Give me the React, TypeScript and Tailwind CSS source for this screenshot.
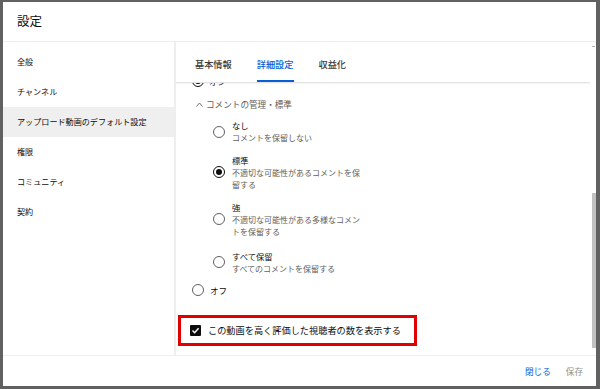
import React from 'react';

const menu = ['全般', 'チャンネル', 'アップロード動画のデフォルト設定', '権限', 'コミュニティ', '契約'];

const Radio = ({ on = false }: { on?: boolean }) => (
  <span
    className={`flex h-[12px] w-[12px] shrink-0 items-center justify-center rounded-full border-[1.5px] ${
      on ? 'border-[#0d0d0d]' : 'border-[#606060]'
    }`}
  >
    {on && <span className="h-[6px] w-[6px] rounded-full bg-[#0d0d0d]" />}
  </span>
);

const options = [
  { label: 'なし', sub: ['コメントを保留しない'], on: false, mt: 'mt-[8.5px]' },
  { label: '標準', sub: ['不適切な可能性があるコメントを保', '留する'], on: true, mt: 'mt-[9.5px]' },
  { label: '強', sub: ['不適切な可能性がある多様なコメン', 'トを保留する'], on: false, mt: 'mt-[10px]' },
  { label: 'すべて保留', sub: ['すべてのコメントを保留する'], on: false, mt: 'mt-[12px]' },
];

export default function App() {
  return (
    <div className="h-[389px] w-[600px] overflow-hidden bg-[#616161] pl-[3px] pt-[2px] font-['Noto_Sans_CJK_JP','Noto_Sans',sans-serif] text-[#0d0d0d]">
      <div className="flex h-[384px] w-[593px] flex-col bg-white">
        {/* header */}
        <div className="flex h-[40px] shrink-0 items-center border-b border-[#eeeeee] pl-[14px] text-[12.5px] leading-none">
          設定
        </div>

        <div className="flex h-[313px] shrink-0">
          {/* sidebar */}
          <div className="w-[173px] shrink-0 border-r-2 border-[#eeeeee] pt-[5px]">
            {menu.map((m, i) => (
              <div
                key={m}
                className={`flex h-[30px] items-center pl-[14px] text-[8.1px] leading-none ${
                  i === 2 ? 'bg-[#efefef]' : ''
                }`}
              >
                {m}
              </div>
            ))}
          </div>

          {/* main */}
          <div className="flex min-w-0 flex-1">
            <div className="flex min-w-0 flex-1 flex-col">
              <div className="flex h-[41px] shrink-0 gap-[25px] border-b border-[#e3e3e3] pl-[19px] text-[9.2px] font-medium leading-none shadow-[0_1px_1px_rgba(0,0,0,0.04)]">
                <div className="flex h-[40px] items-center border-b-2 border-transparent pt-[8px] text-[#3a3a3a]">基本情報</div>
                <div className="flex h-[40px] items-center border-b-2 border-[#065fd4] pt-[8px] text-[#065fd4]">詳細設定</div>
                <div className="flex h-[40px] items-center border-b-2 border-transparent pt-[8px] text-[#3a3a3a]">収益化</div>
              </div>

              <div className="min-h-0 flex-1 overflow-hidden">
                <div className="-mt-[8px] pl-[16px]">
                  <div className="flex h-[12px] items-center gap-[5px] text-[8.5px] leading-none">
                    <Radio on />
                    <span>オン</span>
                  </div>

                  <div className="mt-[10.5px] flex h-[13px] items-center gap-[3px] pl-[4px] text-[8.6px] leading-none text-[#606060]">
                    <svg width="7" height="5" viewBox="0 0 7 5" fill="none">
                      <path d="M0.5 4.5 L3.5 1 L6.5 4.5" stroke="#606060" strokeWidth="0.9" />
                    </svg>
                    <span>コメントの管理・標準</span>
                  </div>

                  <div className="pl-[21px]">
                    {options.map((o) => (
                      <div key={o.label} className={`${o.mt} flex items-center gap-[7px]`}>
                        <Radio on={o.on} />
                        <div>
                          <div className="text-[8.3px] leading-[13px]">{o.label}</div>
                          {o.sub.map((s) => (
                            <div key={s} className="text-[8px] leading-[12px] text-[#606060]">
                              {s}
                            </div>
                          ))}
                        </div>
                      </div>
                    ))}
                  </div>

                  <div className="mt-[9px] flex h-[13px] items-center gap-[6px] text-[8.5px] leading-none">
                    <Radio />
                    <span>オフ</span>
                  </div>

                  <div className="-ml-[14px] mt-[18.5px] flex h-[31px] w-[239px] items-center gap-[7px] border-[3px] border-[#e00000] pl-[9px] text-[9.2px] leading-none">
                    <span className="flex h-[11px] w-[11px] shrink-0 items-center justify-center rounded-[1px] bg-[#0d0d0d]">
                      <svg width="9" height="9" viewBox="0 0 9 9" fill="none">
                        <path d="M1.5 4.6 L3.6 6.7 L7.6 2.2" stroke="white" strokeWidth="1.4" />
                      </svg>
                    </span>
                    <span>この動画を高く評価した視聴者の数を表示する</span>
                  </div>
                </div>
              </div>
            </div>

            {/* scrollbar */}
            <div className="flex w-[6px] shrink-0 flex-col pl-[2px]">
              <div className="mt-[4px] h-[1px] w-[3px] bg-[#b0b0b0]" />
              <div className="mt-[146px] h-[155px] w-[4px] bg-[#c1c1c1]" />
            </div>
          </div>
        </div>

        {/* footer */}
        <div className="flex flex-1 items-center justify-end gap-[15px] border-t border-[#eeeeee] pr-[13px] text-[8.6px] leading-none">
          <span className="text-[#065fd4]">閉じる</span>
          <span className="text-[#909090]">保存</span>
        </div>
      </div>
    </div>
  );
}
